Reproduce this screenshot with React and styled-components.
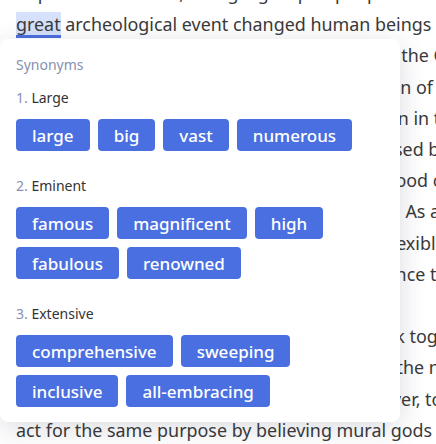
import React from "react";
import styled, { createGlobalStyle } from "styled-components";

const groups = [
  { name: "Large", words: ["large", "big", "vast", "numerous"] },
  {
    name: "Eminent",
    words: ["famous", "magnificent", "high", "fabulous", "renowned"],
  },
  {
    name: "Extensive",
    words: ["comprehensive", "sweeping", "inclusive", "all-embracing"],
  },
];

// text behind the popup, one line each
const lines = [
  "In prehistoric times, a single group of people",
  null,
  "forever. Their earliest paintings were found in the Grotte Chauvet",
  "of southern France, giving us a first description of animals",
  "and hunters, a scene that was too often shown in the caves",
  "of the Palaeolithic eras, and pigments were used by",
  "artist who ground minerals and mixed oil or food colour",
  "into a paste that would stay on the cave walls. As a result",
  "the paintings had proven to be durable and flexible",
  "records of their daily life over a longer time since then",
  "",
  "Groups of people would then gather and work together",
  "to prepare for the big hunts, and were led by the new leader",
  "skilled members of every tribe. Others, however, to",
  "act for the same purpose by believing mural gods or spirits",
];

function App() {
  return (
    <Page>
      <GlobalStyle />
      <Article>
        {lines.map((line, i) =>
          line === null ? (
            <Line key={i}>
              <Caret />
              <Marked>great</Marked> archeological event changed human beings in
              many ways
            </Line>
          ) : (
            <Line key={i}>{line || "\u00a0"}</Line>
          )
        )}
      </Article>

      <Popup>
        <Heading>Synonyms</Heading>
        <Groups>
          {groups.map((g, i) => (
            <Group key={g.name}>
              <Label>
                <Num>{i + 1}.</Num> {g.name}
              </Label>
              <Chips>
                {g.words.map((w) => (
                  <Chip key={w}>{w}</Chip>
                ))}
              </Chips>
            </Group>
          ))}
        </Groups>
      </Popup>
    </Page>
  );
}

export default App;

const GlobalStyle = createGlobalStyle`
  html, body {
    margin: 0;
    padding: 0;
    background: #fff;
  }
  * {
    box-sizing: border-box;
  }
`;

const Page = styled.div`
  position: relative;
  width: 436px;
  height: 444px;
  overflow: hidden;
  font-family: "Noto Sans", "Liberation Sans", sans-serif;
`;

const Article = styled.div`
  margin-top: -22px;
  padding-left: 16px;
  color: #3a3a3a;
  font-size: 17.9px;
  line-height: 31.2px;
`;

const Line = styled.div`
  white-space: nowrap;
`;

const Marked = styled.span`
  background: #d6e2fb;
  box-shadow: inset 0 -3px 0 #4a6fe0;
  padding-bottom: 2px;
`;

const Caret = styled.span`
  display: inline-block;
  width: 1px;
  height: 18px;
  margin-right: -1px;
  background: #333;
  vertical-align: -4px;
`;

const Popup = styled.div`
  position: absolute;
  left: 0;
  top: 39px;
  width: 400px;
  padding: 16px 16px 15px;
  background: #fff;
  border-radius: 8px;
  box-shadow: 0 6px 28px rgba(30, 40, 70, 0.16);
`;

const Heading = styled.div`
  font-size: 14px;
  line-height: 20px;
  color: #8790b3;
  margin-bottom: 13px;
`;

const Groups = styled.div`
  display: flex;
  flex-direction: column;
  gap: 25px;
`;

const Group = styled.div`
  display: flex;
  flex-direction: column;
  gap: 11px;
`;

const Label = styled.div`
  font-size: 14px;
  line-height: 20px;
  color: #333;
`;

const Num = styled.span`
  color: #8790b3;
`;

const Chips = styled.div`
  display: flex;
  flex-wrap: wrap;
  gap: 8px;
  max-width: 340px;
`;

const Chip = styled.span`
  height: 32px;
  padding: 0 16px;
  display: inline-flex;
  align-items: center;
  border-radius: 4px;
  background: #4a6fe0;
  color: #fff;
  font-size: 17px;
  font-weight: 500;
`;
